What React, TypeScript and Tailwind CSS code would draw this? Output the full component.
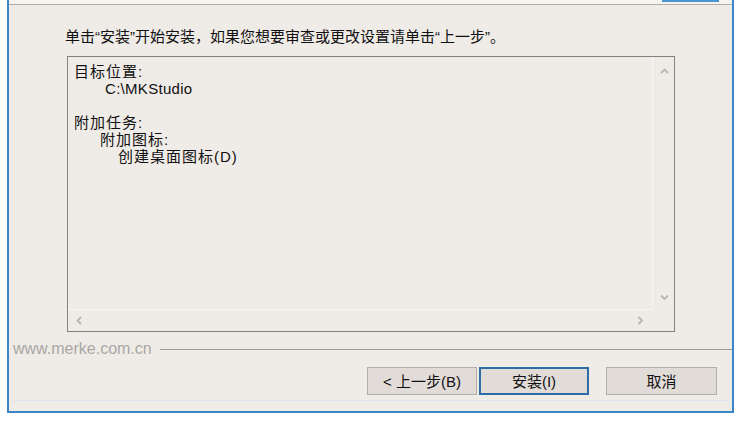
import React from 'react'

const FONT = { fontFamily: '"Liberation Sans", "Noto Sans CJK SC", sans-serif' }

function Chevron({ dir }: { dir: 'up' | 'down' | 'left' | 'right' }) {
    const paths: Record<string, string> = {
        up: 'M1 6 L4.5 2.5 L8 6',
        down: 'M1 2.5 L4.5 6 L8 2.5',
        left: 'M6 1 L2.5 4.5 L6 8',
        right: 'M2.5 1 L6 4.5 L2.5 8',
    }
    return (
        <svg width="9" height="9" viewBox="0 0 9 9" className="block">
            <path d={paths[dir]} fill="none" stroke="#b9b5b1" strokeWidth="1.8" />
        </svg>
    )
}

export default function App() {
    return (
        <div className="w-[739px] h-[421px] bg-white overflow-hidden text-[#111]" style={FONT}>
            <div className="ml-[7px] w-[727px] h-[413px] bg-[#efebe7] border-l-2 border-r-2 border-b-2 border-[#3a86c8] flex flex-col relative">
                {/* header strip */}
                <div className="h-[5px] bg-[#f6f4f1] border-b border-[#b3aca6] shrink-0" />
                <div className="absolute left-[653px] top-0 w-[57px] h-[2px] border-l-2 border-r-2 border-b-2 border-[#4a93d2] bg-[#dfe8ef]" />

                <p className="mt-[22px] ml-[56px] text-[15px] leading-[20px] whitespace-nowrap">
                    单击“安装”开始安装，如果您想要审查或更改设置请单击“上一步”。
                </p>

                {/* summary box */}
                <div className="mt-[9px] ml-[58px] w-[608px] h-[276px] border border-[#858180] grid grid-cols-[1fr_21px] grid-rows-[1fr_21px] shrink-0">
                    <div className="border-r border-b border-dotted border-white pl-[6px] pt-[6px] text-[15px] leading-[17px] tracking-[1px]">
                        <div>目标位置:</div>
                        <div className="pl-[31px] tracking-[0.3px]">C:\MKStudio</div>
                        <div className="h-[17px]" />
                        <div>附加任务:</div>
                        <div className="pl-[26px]">附加图标:</div>
                        <div className="pl-[44px]">创建桌面图标(D)</div>
                    </div>
                    <div className="flex flex-col items-center justify-between pt-[10px] pb-[8px] pl-[1px]">
                        <Chevron dir="up" />
                        <Chevron dir="down" />
                    </div>
                    <div className="flex items-center justify-between pl-[7px] pr-[8px]">
                        <Chevron dir="left" />
                        <Chevron dir="right" />
                    </div>
                    <div />
                </div>

                {/* branding separator */}
                <div className="mt-[7px] flex items-center pl-[4px]">
                    <span className="text-[16px] leading-[20px] text-[#aaa7a4] whitespace-nowrap">www.merke.com.cn</span>
                    <div className="ml-[8px] flex-1 h-px bg-[#a09c98]" />
                </div>

                {/* buttons */}
                <div className="mt-[8px] flex items-center text-[15px]">
                    <button className="ml-[358px] w-[110px] h-[28px] bg-[#e1dcd8] border border-[#b1aeab] leading-none">
                        &lt; 上一步(B)
                    </button>
                    <button className="ml-[2px] w-[110px] h-[28px] bg-[#e1dcd8] border-2 border-[#2c6da8] leading-none">
                        安装(I)
                    </button>
                    <button className="ml-[17px] w-[111px] h-[28px] bg-[#e1dcd8] border border-[#b1aeab] leading-none">
                        取消
                    </button>
                </div>
                <div className="mt-auto mb-[10px] mx-[3px] h-px bg-[#dde6ec]" />
            </div>
        </div>
    )
}
